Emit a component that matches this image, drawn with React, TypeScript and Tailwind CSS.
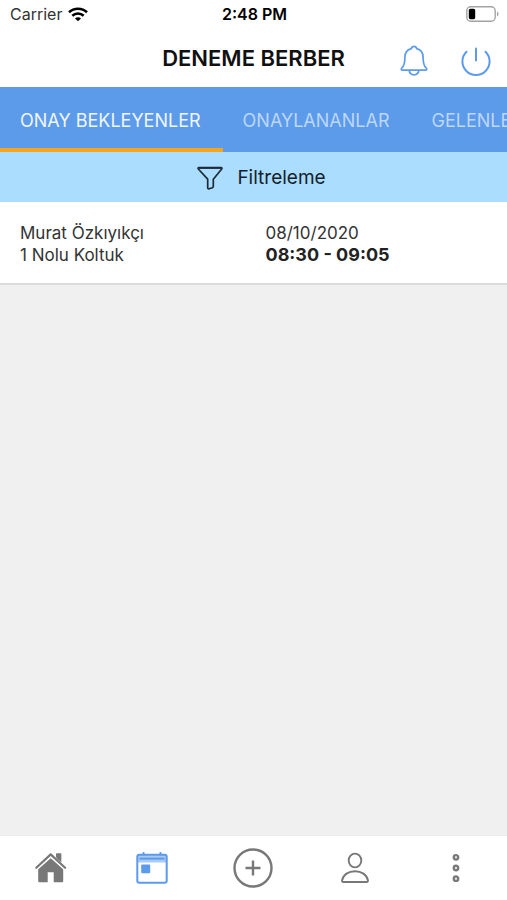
import React, { useState } from "react";

interface Appointment {
  customer: string;
  seat: string;
  date: string;
  time: string;
}

const tabs = ["ONAY BEKLEYENLER", "ONAYLANANLAR", "GELENLER"];

const appointments: Appointment[] = [
  {
    customer: "Murat Özkıyıkçı",
    seat: "1 Nolu Koltuk",
    date: "08/10/2020",
    time: "08:30 - 09:05",
  },
];

const WifiIcon = () => (
  <svg width="20" height="15" viewBox="0 0 20 15" fill="none" stroke="#000" strokeWidth="2.6">
    <path d="M1 5.2C6 .6 14 .6 19 5.2" />
    <path d="M4.3 8.8c3.3-3 8.1-3 11.4 0" />
    <path d="M10 14.3 7 11.4c1.7-1.5 4.3-1.5 6 0z" fill="#000" stroke="none" />
  </svg>
);

const BatteryIcon = () => (
  <svg width="33" height="16" viewBox="0 0 33 16" fill="none">
    <rect x="0.8" y="0.8" width="28.4" height="14.4" rx="4" stroke="#a3a3a3" strokeWidth="1.4" />
    <rect x="2.8" y="2.8" width="6.4" height="10.4" rx="1.6" fill="#000" />
    <path d="M31 5.5c2 .8 2 4.2 0 5z" fill="#a3a3a3" />
  </svg>
);

const BellIcon = () => (
  <svg width="28" height="32" viewBox="0 0 28 32" fill="none" stroke="#5c9aec" strokeWidth="1.7" strokeLinejoin="round">
    <path d="M14 1.4c-1.5 0-2.3.8-2.7 2.2C7 4.8 4.9 8.2 4.9 12.2c0 6.3-.8 8.700-3 10.700-1.100 1-.7 2.300.6 2.300h23c1.300 0 1.700-1.300.6-2.300-2.200-2-3-4.400-3-10.700 0-4-2.100-7.400-6.400-8.600-.4-1.400-1.200-2.200-2.700-2.200z" />
    <path d="M9.200 25.400c.3 2.800 2.400 4.400 4.800 4.400s4.500-1.600 4.800-4.400" />
  </svg>
);

const PowerIcon = () => (
  <svg width="32" height="32" viewBox="0 0 32 32" fill="none" stroke="#5c9aec" strokeWidth="2" strokeLinecap="round">
    <path d="M6.500 6.700a13.600 13.600 0 1 0 19 0" />
    <path d="M16 3.400v12" />
  </svg>
);

const FunnelIcon = () => (
  <svg width="26" height="24" viewBox="0 0 26 24" fill="none" stroke="#1c2b36" strokeWidth="1.700" strokeLinejoin="round">
    <path d="M2 1.500h22c1 0 1.200.8.700 1.500l-8.400 10.200v7.100c0 .7-.3 1.100-.9 1.400l-3.300 1.100c-.9.200-1.400-.2-1.400-1v-8.600L1.300 3c-.5-.7-.3-1.500.7-1.500z" />
    <path d="M2 2.400h22" strokeWidth="1" />
  </svg>
);

const HomeIcon = () => (
  <svg width="32" height="32" viewBox="0 0 32 32" fill="#787878">
    <path d="M15.700 6.200 3.200 17.200v11.600c0 1 .5 1.500 1.500 1.500h8V20.300h6v10h8c1 0 1.500-.5 1.500-1.500V17.200z" />
    <path d="M21 2.400c0-.5.300-.8.800-.8h3.600c.5 0 .8.300.8.800v9.300L21 7z" />
    <path d="M.8 16.200 15.700 2.500l14.900 13.700" fill="none" stroke="#fff" strokeWidth="4" />
    <path d="M21.400 1.600h4.800v8.700l-4.800-4.400z" />
    <path d="M1.300 15.800 15.700 2.400l14.400 13.400" fill="none" stroke="#787878" strokeWidth="2.200" strokeLinecap="round" strokeLinejoin="round" />
  </svg>
);

const CalendarIcon = () => (
  <svg width="32" height="32" viewBox="0 0 32 32" fill="none" stroke="#5c9aec">
    <rect x="1" y="3" width="30" height="7.500" rx="2" fill="#a9cbf6" stroke="none" />
    <rect x="1.300" y="2.800" width="29.400" height="27.900" rx="2" strokeWidth="2" />
    <path d="M3.500 6.600h25" strokeWidth="2" />
    <path d="M7.500 1.200v1M24.500 1.200v1" strokeWidth="2.200" strokeLinecap="round" />
    <rect x="5.200" y="12.500" width="9" height="8.700" rx="1" fill="#5c9aec" stroke="none" />
  </svg>
);

const AddIcon = () => (
  <svg width="40" height="40" viewBox="0 0 40 40" fill="none" stroke="#787878" strokeWidth="2.400">
    <circle cx="20" cy="20" r="18.500" />
    <path d="M12.500 20h15M20 12.500v15" />
  </svg>
);

const PersonIcon = () => (
  <svg width="28" height="32" viewBox="0 0 28 32" fill="none" stroke="#787878" strokeWidth="1.900" strokeLinejoin="round">
    <ellipse cx="14" cy="8.500" rx="6.300" ry="6.900" />
    <path d="M2.300 30c-1 0-1.400-.7-1.200-1.700C2.200 22.700 7.500 19.200 14 19.200s11.800 3.500 12.900 9.100c.2 1-.2 1.700-1.200 1.700z" />
  </svg>
);

const MoreIcon = () => (
  <svg width="8" height="32" viewBox="0 0 8 32" fill="#dcdcdc" stroke="#787878" strokeWidth="2.200">
    <circle cx="4" cy="5.300" r="2.300" />
    <circle cx="4" cy="16" r="2.300" />
    <circle cx="4" cy="26.700" r="2.300" />
  </svg>
);

const navItems = [
  { label: "Ana sayfa", icon: <HomeIcon /> },
  { label: "Randevular", icon: <CalendarIcon /> },
  { label: "Ekle", icon: <AddIcon /> },
  { label: "Profil", icon: <PersonIcon /> },
  { label: "Diğer", icon: <MoreIcon /> },
];

export default function App() {
  const [activeTab, setActiveTab] = useState(0);

  return (
    <div className="flex min-h-screen flex-col bg-[#f0f0f0] font-['Inter','Liberation_Sans',sans-serif] text-[#333]">
      {/* Status bar */}
      <div className="grid h-7 grid-cols-[1fr_auto_1fr] items-center bg-white pr-2 pl-2.5 text-base text-black">
        <div className="flex items-center gap-1.5 text-[#333]">
          <span>Carrier</span>
          <WifiIcon />
        </div>
        <span className="font-semibold">2:48 PM</span>
        <div className="flex justify-end">
          <BatteryIcon />
        </div>
      </div>

      {/* Header */}
      <header className="grid h-[59px] grid-cols-[1fr_auto_1fr] items-center bg-white px-[15px]">
        <h1 className="col-start-2 pt-0.5 text-[22px] font-semibold text-[#111]">DENEME BERBER</h1>
        <div className="flex items-center justify-end gap-8 pt-1.5">
          <button type="button" aria-label="Bildirimler">
            <BellIcon />
          </button>
          <button type="button" aria-label="Çıkış">
            <PowerIcon />
          </button>
        </div>
      </header>

      {/* Tabs */}
      <div role="tablist" className="flex h-[65px] overflow-hidden bg-[#5c9aea]">
        {tabs.map((tab, index) => (
          <button
            key={tab}
            type="button"
            role="tab"
            aria-selected={activeTab === index}
            onClick={() => setActiveTab(index)}
            className={`shrink-0 border-b-4 pt-1.5 pr-[22px] pl-5 text-[18px] ${
              activeTab === index
                ? "border-[#f5a61d] text-[#f1f6fe]"
                : "border-transparent text-[#bdd7f8]"
            }`}
          >
            {tab}
          </button>
        ))}
      </div>

      {/* Filter */}
      <button
        type="button"
        className="flex h-[50px] items-center justify-center gap-3.5 bg-[#aaddff] pt-0.5 pl-4 text-[19px] text-[#14212b]"
      >
        <FunnelIcon />
        Filtreleme
      </button>

      <main className="flex-1">
        <ul>
          {appointments.map((item) => (
            <li
              key={item.date + item.time}
              className="grid grid-cols-2 gap-6 border-b-2 border-[#dadada] bg-white px-5 pt-5 pb-[17px] text-[17px] leading-[22px]"
            >
              <div>
                <p>{item.customer}</p>
                <p>{item.seat}</p>
              </div>
              <div>
                <p>{item.date}</p>
                <p className="text-[18px] leading-[22px] font-bold text-[#222]">{item.time}</p>
              </div>
            </li>
          ))}
        </ul>
      </main>

      {/* Bottom navigation */}
      <nav className="grid h-[65px] grid-cols-5 border-t border-[#ececec] bg-white">
        {navItems.map((item) => (
          <button
            key={item.label}
            type="button"
            aria-label={item.label}
            className="flex items-center justify-center"
          >
            {item.icon}
          </button>
        ))}
      </nav>
    </div>
  );
}
